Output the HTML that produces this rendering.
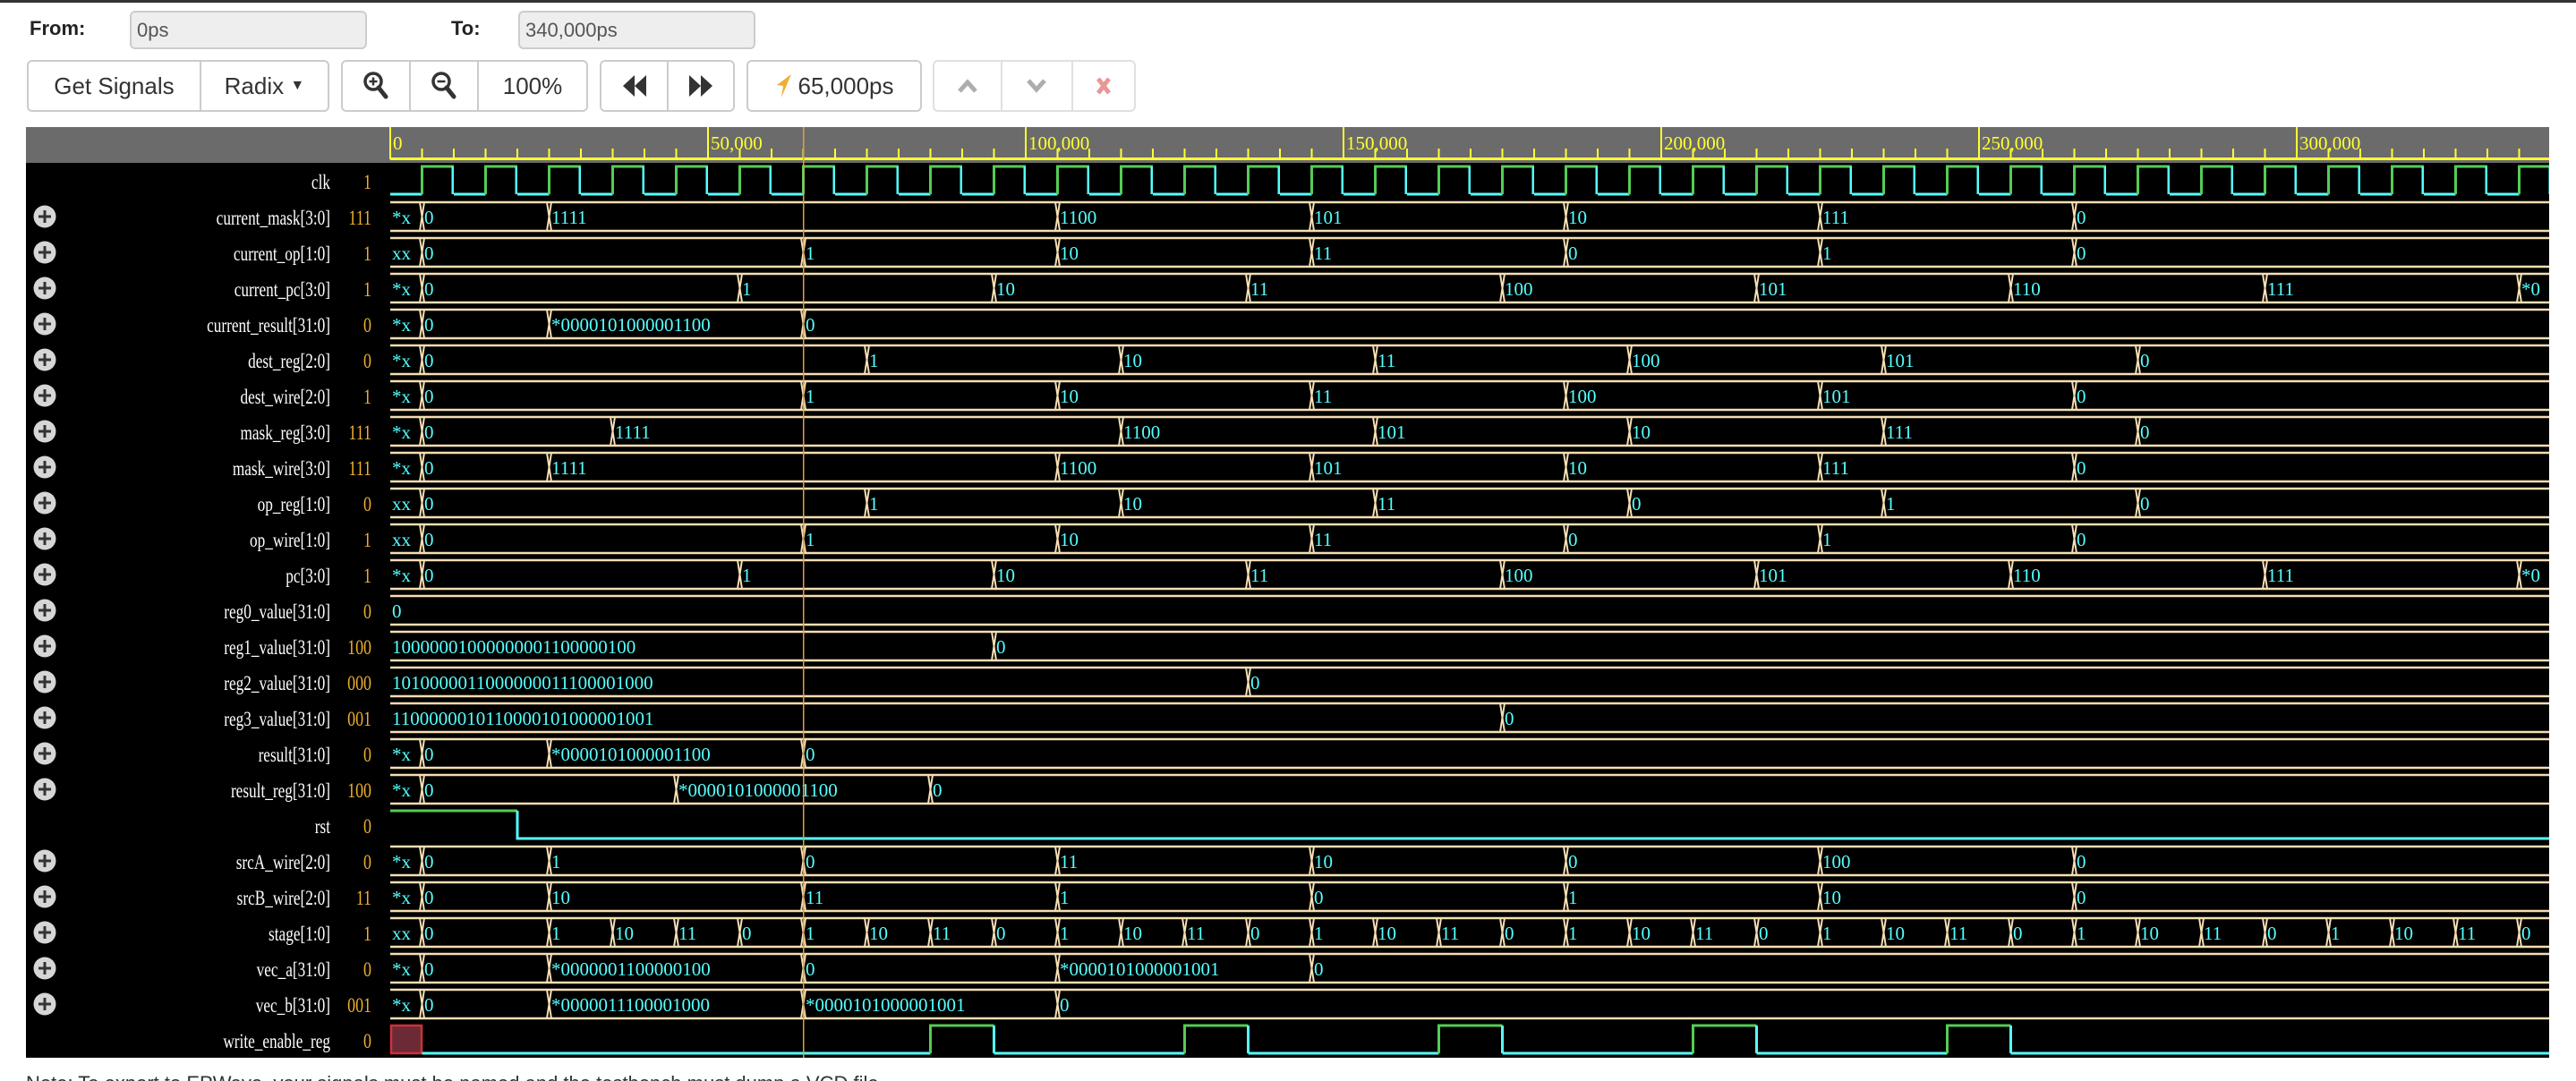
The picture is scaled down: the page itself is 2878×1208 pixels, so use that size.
<!DOCTYPE html>
<html><head><meta charset="utf-8"><style>
*{margin:0;padding:0;box-sizing:border-box}
html,body{width:2878px;height:1208px;overflow:hidden}
body{background:#fff;position:relative;font-family:"Liberation Sans",sans-serif}
.topbar{position:absolute;left:0;top:0;width:2878px;height:3px;background:#333}
.lbl{position:absolute;font-weight:bold;font-size:22px;color:#222}
.inp{position:absolute;top:12px;height:43px;background:#eee;border:2px solid #ccc;border-radius:6px;font-size:22px;color:#555;padding:9px 6px;line-height:22px}
.grp{position:absolute;top:67px;height:58px;border:2px solid #ccc;border-radius:6px;background:#fff;display:flex}
.grp div{height:100%;display:flex;align-items:center;justify-content:center;font-size:26px;color:#333;border-right:2px solid #ccc}
.grp div:last-child{border-right:none}
.dis{opacity:.6}
svg.w{position:absolute;left:0;top:0}
.note{position:absolute;left:29px;top:1198px;font-size:22px;line-height:26px;color:#333}
</style></head><body>
<div class="topbar"></div>
<div class="lbl" style="left:33px;top:19px">From:</div>
<div class="inp" style="left:145px;width:265px">0ps</div>
<div class="lbl" style="left:504px;top:19px">To:</div>
<div class="inp" style="left:579px;width:265px">340,000ps</div>

<div class="grp" style="left:30px;width:338px"><div style="width:194px">Get Signals</div><div style="width:142px">Radix&nbsp;<span style="font-size:16px">▼</span></div></div>
<div class="grp" style="left:381px;width:276px">
<div style="width:76px"><svg width="30" height="34" viewBox="0 0 30 34"><circle cx="12" cy="12" r="9" fill="none" stroke="#333" stroke-width="3.5"/><path d="M18 19L26 29" stroke="#333" stroke-width="5" stroke-linecap="round"/><path d="M7.5 12H16.5M12 7.5V16.5" stroke="#333" stroke-width="2.5"/></svg></div>
<div style="width:76px"><svg width="30" height="34" viewBox="0 0 30 34"><circle cx="12" cy="12" r="9" fill="none" stroke="#333" stroke-width="3.5"/><path d="M18 19L26 29" stroke="#333" stroke-width="5" stroke-linecap="round"/><path d="M7.5 12H16.5" stroke="#333" stroke-width="2.5"/></svg></div>
<div style="width:120px">100%</div></div>
<div class="grp" style="left:670px;width:151px">
<div style="width:76px"><svg width="28" height="24" viewBox="0 0 28 24"><path d="M14 0L1 12L14 24ZM27 0L14 12L27 24Z" fill="#333"/></svg></div>
<div style="width:73px"><svg width="28" height="24" viewBox="0 0 28 24"><path d="M1 0L14 12L1 24ZM14 0L27 12L14 24Z" fill="#333"/></svg></div></div>
<div class="grp" style="left:834px;width:196px"><div style="width:192px"><svg width="20" height="28" viewBox="0 0 20 28" style="margin-right:6px"><path d="M18 1L2 13L9 14L7 27Z" fill="#f0ad30"/></svg>65,000ps</div></div>
<div class="grp dis" style="left:1042px;width:227px">
<div style="width:77px"><svg width="24" height="16" viewBox="0 0 24 16"><path d="M3 14L12 4L21 14" fill="none" stroke="#777" stroke-width="5"/></svg></div>
<div style="width:79px"><svg width="24" height="16" viewBox="0 0 24 16"><path d="M3 2L12 12L21 2" fill="none" stroke="#777" stroke-width="5"/></svg></div>
<div style="width:69px"><svg width="18" height="22" viewBox="0 0 18 22"><path d="M3 3L15 19M15 3L3 19" stroke="#d9534f" stroke-width="5"/></svg></div></div>

<svg class="w" width="2878" height="1208" xmlns="http://www.w3.org/2000/svg">
<defs>
<pattern id="clkp" patternUnits="userSpaceOnUse" x="436" y="182" width="71" height="40">
<path d="M0 35H35.5" stroke="#5ff" stroke-width="3"/><path d="M35.5 35V4H71" stroke="#5c5" stroke-width="3" fill="none"/><path d="M70 4V35" stroke="#5ff" stroke-width="3"/>
</pattern>
<pattern id="tick" patternUnits="userSpaceOnUse" x="435" y="0" width="35.5" height="200"><rect x="0" y="166" width="2" height="12" fill="#ff3"/></pattern>
<path id="bl" d="M436 4H2848M436 36H2848" stroke="#f5deb3" stroke-width="2.5" fill="none"/>
<path id="x" d="M-2.5 4L2.5 36M2.5 4L-2.5 36" stroke="#f5deb3" stroke-width="2" fill="none"/>
<g id="pl"><circle cx="50" cy="20" r="12.5" fill="#d6d6d6"/><path d="M43 20H57M50 13V27" stroke="#333" stroke-width="3"/></g>
</defs>
<rect x="29" y="142" width="2819" height="40" fill="#6b6b6b"/>
<rect x="29" y="182" width="2819" height="1000" fill="#000"/>
<rect x="436" y="0" width="2412" height="200" fill="url(#tick)"/>
<rect x="436" y="176" width="2412" height="3" fill="#ff3"/>
<g fill="#ff3">
<rect x="435" y="142" width="2" height="36"/><rect x="790" y="142" width="2" height="36"/><rect x="1145" y="142" width="2" height="36"/><rect x="1500" y="142" width="2" height="36"/><rect x="1855" y="142" width="2" height="36"/><rect x="2210" y="142" width="2" height="36"/><rect x="2565" y="142" width="2" height="36"/>
</g>
<g fill="#ff3" font-family="Liberation Serif,serif" font-size="21">
<text x="439" y="167">0</text><text x="794" y="167">50,000</text><text x="1149" y="167">100,000</text><text x="1504" y="167">150,000</text><text x="1859" y="167">200,000</text><text x="2214" y="167">250,000</text><text x="2569" y="167">300,000</text>
</g>
<g transform="translate(369,0) scale(0.75,1) translate(-369,0)" font-family="Liberation Serif,serif" font-size="23" fill="#fff" text-anchor="end">
<text x="369" y="211">clk</text><text x="369" y="251">current_mask[3:0]</text><text x="369" y="291">current_op[1:0]</text><text x="369" y="331">current_pc[3:0]</text><text x="369" y="371">current_result[31:0]</text><text x="369" y="411">dest_reg[2:0]</text><text x="369" y="451">dest_wire[2:0]</text><text x="369" y="491">mask_reg[3:0]</text><text x="369" y="531">mask_wire[3:0]</text><text x="369" y="571">op_reg[1:0]</text><text x="369" y="611">op_wire[1:0]</text><text x="369" y="651">pc[3:0]</text><text x="369" y="691">reg0_value[31:0]</text><text x="369" y="731">reg1_value[31:0]</text><text x="369" y="771">reg2_value[31:0]</text><text x="369" y="811">reg3_value[31:0]</text><text x="369" y="851">result[31:0]</text><text x="369" y="891">result_reg[31:0]</text><text x="369" y="931">rst</text><text x="369" y="971">srcA_wire[2:0]</text><text x="369" y="1011">srcB_wire[2:0]</text><text x="369" y="1051">stage[1:0]</text><text x="369" y="1091">vec_a[31:0]</text><text x="369" y="1131">vec_b[31:0]</text><text x="369" y="1171">write_enable_reg</text>
</g>
<g transform="translate(415,0) scale(0.78,1) translate(-415,0)" font-family="Liberation Serif,serif" font-size="23" fill="#f0b030" text-anchor="end">
<text x="415" y="211">1</text><text x="415" y="251">111</text><text x="415" y="291">1</text><text x="415" y="331">1</text><text x="415" y="371">0</text><text x="415" y="411">0</text><text x="415" y="451">1</text><text x="415" y="491">111</text><text x="415" y="531">111</text><text x="415" y="571">0</text><text x="415" y="611">1</text><text x="415" y="651">1</text><text x="415" y="691">0</text><text x="415" y="731">100</text><text x="415" y="771">000</text><text x="415" y="811">001</text><text x="415" y="851">0</text><text x="415" y="891">100</text><text x="415" y="931">0</text><text x="415" y="971">0</text><text x="415" y="1011">11</text><text x="415" y="1051">1</text><text x="415" y="1091">0</text><text x="415" y="1131">001</text><text x="415" y="1171">0</text>
</g>
<g>
<use href="#pl" y="222"/><use href="#pl" y="262"/><use href="#pl" y="302"/><use href="#pl" y="342"/><use href="#pl" y="382"/><use href="#pl" y="422"/><use href="#pl" y="462"/><use href="#pl" y="502"/><use href="#pl" y="542"/><use href="#pl" y="582"/><use href="#pl" y="622"/><use href="#pl" y="662"/><use href="#pl" y="702"/><use href="#pl" y="742"/><use href="#pl" y="782"/><use href="#pl" y="822"/><use href="#pl" y="862"/><use href="#pl" y="942"/><use href="#pl" y="982"/><use href="#pl" y="1022"/><use href="#pl" y="1062"/><use href="#pl" y="1102"/>
</g>
<rect x="436" y="182" width="2412" height="40" fill="url(#clkp)"/>
<g font-family="Liberation Serif,serif" font-size="21" fill="#5ff">
<g transform="translate(0,222)"><use href="#bl"/><use href="#x" x="471.5"/><use href="#x" x="613.5"/><use href="#x" x="1181.5"/><use href="#x" x="1465.5"/><use href="#x" x="1749.5"/><use href="#x" x="2033.5"/><use href="#x" x="2317.5"/>
<text x="438" y="28">*x</text><text x="474" y="28">0</text><text x="616" y="28">1111</text><text x="1184" y="28">1100</text><text x="1468" y="28">101</text><text x="1752" y="28">10</text><text x="2036" y="28">111</text><text x="2320" y="28">0</text></g>
<g transform="translate(0,262)"><use href="#bl"/><use href="#x" x="471.5"/><use href="#x" x="897.5"/><use href="#x" x="1181.5"/><use href="#x" x="1465.5"/><use href="#x" x="1749.5"/><use href="#x" x="2033.5"/><use href="#x" x="2317.5"/>
<text x="438" y="28">xx</text><text x="474" y="28">0</text><text x="900" y="28">1</text><text x="1184" y="28">10</text><text x="1468" y="28">11</text><text x="1752" y="28">0</text><text x="2036" y="28">1</text><text x="2320" y="28">0</text></g>
<g transform="translate(0,302)"><use href="#bl"/><use href="#x" x="471.5"/><use href="#x" x="826.5"/><use href="#x" x="1110.5"/><use href="#x" x="1394.5"/><use href="#x" x="1678.5"/><use href="#x" x="1962.5"/><use href="#x" x="2246.5"/><use href="#x" x="2530.5"/><use href="#x" x="2814.5"/>
<text x="438" y="28">*x</text><text x="474" y="28">0</text><text x="829" y="28">1</text><text x="1113" y="28">10</text><text x="1397" y="28">11</text><text x="1681" y="28">100</text><text x="1965" y="28">101</text><text x="2249" y="28">110</text><text x="2533" y="28">111</text><text x="2817" y="28">*0</text></g>
<g transform="translate(0,342)"><use href="#bl"/><use href="#x" x="471.5"/><use href="#x" x="613.5"/><use href="#x" x="897.5"/>
<text x="438" y="28">*x</text><text x="474" y="28">0</text><text x="616" y="28">*0000101000001100</text><text x="900" y="28">0</text></g>
<g transform="translate(0,382)"><use href="#bl"/><use href="#x" x="471.5"/><use href="#x" x="968.5"/><use href="#x" x="1252.5"/><use href="#x" x="1536.5"/><use href="#x" x="1820.5"/><use href="#x" x="2104.5"/><use href="#x" x="2388.5"/>
<text x="438" y="28">*x</text><text x="474" y="28">0</text><text x="971" y="28">1</text><text x="1255" y="28">10</text><text x="1539" y="28">11</text><text x="1823" y="28">100</text><text x="2107" y="28">101</text><text x="2391" y="28">0</text></g>
<g transform="translate(0,422)"><use href="#bl"/><use href="#x" x="471.5"/><use href="#x" x="897.5"/><use href="#x" x="1181.5"/><use href="#x" x="1465.5"/><use href="#x" x="1749.5"/><use href="#x" x="2033.5"/><use href="#x" x="2317.5"/>
<text x="438" y="28">*x</text><text x="474" y="28">0</text><text x="900" y="28">1</text><text x="1184" y="28">10</text><text x="1468" y="28">11</text><text x="1752" y="28">100</text><text x="2036" y="28">101</text><text x="2320" y="28">0</text></g>
<g transform="translate(0,462)"><use href="#bl"/><use href="#x" x="471.5"/><use href="#x" x="684.5"/><use href="#x" x="1252.5"/><use href="#x" x="1536.5"/><use href="#x" x="1820.5"/><use href="#x" x="2104.5"/><use href="#x" x="2388.5"/>
<text x="438" y="28">*x</text><text x="474" y="28">0</text><text x="687" y="28">1111</text><text x="1255" y="28">1100</text><text x="1539" y="28">101</text><text x="1823" y="28">10</text><text x="2107" y="28">111</text><text x="2391" y="28">0</text></g>
<g transform="translate(0,502)"><use href="#bl"/><use href="#x" x="471.5"/><use href="#x" x="613.5"/><use href="#x" x="1181.5"/><use href="#x" x="1465.5"/><use href="#x" x="1749.5"/><use href="#x" x="2033.5"/><use href="#x" x="2317.5"/>
<text x="438" y="28">*x</text><text x="474" y="28">0</text><text x="616" y="28">1111</text><text x="1184" y="28">1100</text><text x="1468" y="28">101</text><text x="1752" y="28">10</text><text x="2036" y="28">111</text><text x="2320" y="28">0</text></g>
<g transform="translate(0,542)"><use href="#bl"/><use href="#x" x="471.5"/><use href="#x" x="968.5"/><use href="#x" x="1252.5"/><use href="#x" x="1536.5"/><use href="#x" x="1820.5"/><use href="#x" x="2104.5"/><use href="#x" x="2388.5"/>
<text x="438" y="28">xx</text><text x="474" y="28">0</text><text x="971" y="28">1</text><text x="1255" y="28">10</text><text x="1539" y="28">11</text><text x="1823" y="28">0</text><text x="2107" y="28">1</text><text x="2391" y="28">0</text></g>
<g transform="translate(0,582)"><use href="#bl"/><use href="#x" x="471.5"/><use href="#x" x="897.5"/><use href="#x" x="1181.5"/><use href="#x" x="1465.5"/><use href="#x" x="1749.5"/><use href="#x" x="2033.5"/><use href="#x" x="2317.5"/>
<text x="438" y="28">xx</text><text x="474" y="28">0</text><text x="900" y="28">1</text><text x="1184" y="28">10</text><text x="1468" y="28">11</text><text x="1752" y="28">0</text><text x="2036" y="28">1</text><text x="2320" y="28">0</text></g>
<g transform="translate(0,622)"><use href="#bl"/><use href="#x" x="471.5"/><use href="#x" x="826.5"/><use href="#x" x="1110.5"/><use href="#x" x="1394.5"/><use href="#x" x="1678.5"/><use href="#x" x="1962.5"/><use href="#x" x="2246.5"/><use href="#x" x="2530.5"/><use href="#x" x="2814.5"/>
<text x="438" y="28">*x</text><text x="474" y="28">0</text><text x="829" y="28">1</text><text x="1113" y="28">10</text><text x="1397" y="28">11</text><text x="1681" y="28">100</text><text x="1965" y="28">101</text><text x="2249" y="28">110</text><text x="2533" y="28">111</text><text x="2817" y="28">*0</text></g>
<g transform="translate(0,662)"><use href="#bl"/><text x="438" y="28">0</text></g>
<g transform="translate(0,702)"><use href="#bl"/><use href="#x" x="1110.5"/><text x="438" y="28">10000001000000001100000100</text><text x="1113" y="28">0</text></g>
<g transform="translate(0,742)"><use href="#bl"/><use href="#x" x="1394.5"/><text x="438" y="28">1010000011000000011100001000</text><text x="1397" y="28">0</text></g>
<g transform="translate(0,782)"><use href="#bl"/><use href="#x" x="1678.5"/><text x="438" y="28">1100000010110000101000001001</text><text x="1681" y="28">0</text></g>
<g transform="translate(0,822)"><use href="#bl"/><use href="#x" x="471.5"/><use href="#x" x="613.5"/><use href="#x" x="897.5"/>
<text x="438" y="28">*x</text><text x="474" y="28">0</text><text x="616" y="28">*0000101000001100</text><text x="900" y="28">0</text></g>
<g transform="translate(0,862)"><use href="#bl"/><use href="#x" x="471.5"/><use href="#x" x="755.5"/><use href="#x" x="1039.5"/>
<text x="438" y="28">*x</text><text x="474" y="28">0</text><text x="758" y="28">*0000101000001100</text><text x="1042" y="28">0</text></g>
<g transform="translate(0,942)"><use href="#bl"/><use href="#x" x="471.5"/><use href="#x" x="613.5"/><use href="#x" x="897.5"/><use href="#x" x="1181.5"/><use href="#x" x="1465.5"/><use href="#x" x="1749.5"/><use href="#x" x="2033.5"/><use href="#x" x="2317.5"/>
<text x="438" y="28">*x</text><text x="474" y="28">0</text><text x="616" y="28">1</text><text x="900" y="28">0</text><text x="1184" y="28">11</text><text x="1468" y="28">10</text><text x="1752" y="28">0</text><text x="2036" y="28">100</text><text x="2320" y="28">0</text></g>
<g transform="translate(0,982)"><use href="#bl"/><use href="#x" x="471.5"/><use href="#x" x="613.5"/><use href="#x" x="897.5"/><use href="#x" x="1181.5"/><use href="#x" x="1465.5"/><use href="#x" x="1749.5"/><use href="#x" x="2033.5"/><use href="#x" x="2317.5"/>
<text x="438" y="28">*x</text><text x="474" y="28">0</text><text x="616" y="28">10</text><text x="900" y="28">11</text><text x="1184" y="28">1</text><text x="1468" y="28">0</text><text x="1752" y="28">1</text><text x="2036" y="28">10</text><text x="2320" y="28">0</text></g>
<g transform="translate(0,1022)"><use href="#bl"/><use href="#x" x="471.5"/>
<use href="#x" x="613.5"/><use href="#x" x="684.5"/><use href="#x" x="755.5"/><use href="#x" x="826.5"/><use href="#x" x="897.5"/><use href="#x" x="968.5"/><use href="#x" x="1039.5"/><use href="#x" x="1110.5"/><use href="#x" x="1181.5"/><use href="#x" x="1252.5"/><use href="#x" x="1323.5"/><use href="#x" x="1394.5"/><use href="#x" x="1465.5"/><use href="#x" x="1536.5"/><use href="#x" x="1607.5"/><use href="#x" x="1678.5"/><use href="#x" x="1749.5"/><use href="#x" x="1820.5"/><use href="#x" x="1891.5"/><use href="#x" x="1962.5"/><use href="#x" x="2033.5"/><use href="#x" x="2104.5"/><use href="#x" x="2175.5"/><use href="#x" x="2246.5"/><use href="#x" x="2317.5"/><use href="#x" x="2388.5"/><use href="#x" x="2459.5"/><use href="#x" x="2530.5"/><use href="#x" x="2601.5"/><use href="#x" x="2672.5"/><use href="#x" x="2743.5"/><use href="#x" x="2814.5"/>
<text x="438" y="28">xx</text><text x="474" y="28">0</text>
<text x="616" y="28">1</text><text x="687" y="28">10</text><text x="758" y="28">11</text><text x="829" y="28">0</text>
<text x="900" y="28">1</text><text x="971" y="28">10</text><text x="1042" y="28">11</text><text x="1113" y="28">0</text>
<text x="1184" y="28">1</text><text x="1255" y="28">10</text><text x="1326" y="28">11</text><text x="1397" y="28">0</text>
<text x="1468" y="28">1</text><text x="1539" y="28">10</text><text x="1610" y="28">11</text><text x="1681" y="28">0</text>
<text x="1752" y="28">1</text><text x="1823" y="28">10</text><text x="1894" y="28">11</text><text x="1965" y="28">0</text>
<text x="2036" y="28">1</text><text x="2107" y="28">10</text><text x="2178" y="28">11</text><text x="2249" y="28">0</text>
<text x="2320" y="28">1</text><text x="2391" y="28">10</text><text x="2462" y="28">11</text><text x="2533" y="28">0</text>
<text x="2604" y="28">1</text><text x="2675" y="28">10</text><text x="2746" y="28">11</text><text x="2817" y="28">0</text></g>
<g transform="translate(0,1062)"><use href="#bl"/><use href="#x" x="471.5"/><use href="#x" x="613.5"/><use href="#x" x="897.5"/><use href="#x" x="1181.5"/><use href="#x" x="1465.5"/>
<text x="438" y="28">*x</text><text x="474" y="28">0</text><text x="616" y="28">*0000001100000100</text><text x="900" y="28">0</text><text x="1184" y="28">*0000101000001001</text><text x="1468" y="28">0</text></g>
<g transform="translate(0,1102)"><use href="#bl"/><use href="#x" x="471.5"/><use href="#x" x="613.5"/><use href="#x" x="897.5"/><use href="#x" x="1181.5"/>
<text x="438" y="28">*x</text><text x="474" y="28">0</text><text x="616" y="28">*0000011100001000</text><text x="900" y="28">*0000101000001001</text><text x="1184" y="28">0</text></g>
</g>
<path d="M436 906H578" stroke="#5c5" stroke-width="3" fill="none"/>
<path d="M578 906V937H2848" stroke="#5ff" stroke-width="3" fill="none"/>
<rect x="437" y="1146" width="34" height="31" fill="#6b2a35" stroke="#d0303a" stroke-width="2.5"/>
<path d="M471.5 1177H1039.5M1110.5 1177H1323.5M1394.5 1177H1607.5M1678.5 1177H1891.5M1962.5 1177H2175.5M2246.5 1177H2848" stroke="#5ff" stroke-width="3" fill="none"/>
<path d="M1039.5 1177V1146H1110.5M1323.5 1177V1146H1394.5M1607.5 1177V1146H1678.5M1891.5 1177V1146H1962.5M2175.5 1177V1146H2246.5" stroke="#5c5" stroke-width="3" fill="none"/>
<path d="M1110.5 1146V1177M1394.5 1146V1177M1678.5 1146V1177M1962.5 1146V1177M2246.5 1146V1177" stroke="#5ff" stroke-width="3"/>
<rect x="897" y="142" width="1.5" height="1040" fill="#e0a040"/>
</svg>
<div class="note">Note: To export to EPWave, your signals must be named and the testbench must dump a VCD file.</div>
</body></html>
